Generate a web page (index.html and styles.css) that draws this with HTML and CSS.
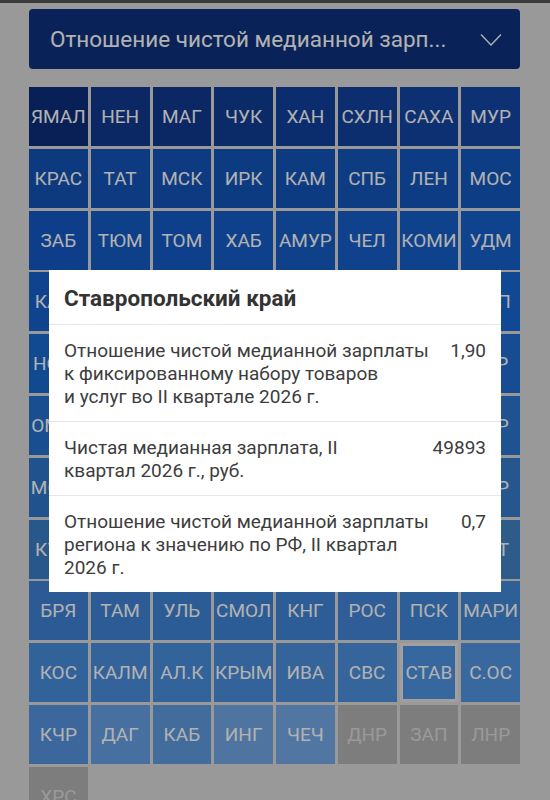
FILE: index.html
```html
<!DOCTYPE html>
<html lang="ru">
<head>
  <meta charset="UTF-8">
  <meta name="viewport" content="width=device-width, initial-scale=1.0">
  <title>Регионы</title>
  <link rel="stylesheet" href="styles.css">
</head>
<body>
  <div class="topbar"></div>
  <div class="page">
    <button class="select">
      <span class="select-text">Отношение чистой медианной зарп...</span>
      <svg class="chevron" width="22" height="14" viewBox="0 0 22 14">
        <polyline points="1,1.5 11,12 21,1.5" fill="none" stroke="#fff" stroke-width="1.4"/>
      </svg>
    </button>
    <div class="grid" id="grid"></div>
  </div>

  <div class="backdrop"></div>

  <div class="dialog">
    <div class="dialog-title">Ставропольский край</div>
    <div class="stat">
      <div class="stat-label">Отношение чистой медианной зарплаты<br>к фиксированному набору товаров<br>и услуг во II квартале 2026 г.</div>
      <div class="stat-value">1,90</div>
    </div>
    <div class="stat">
      <div class="stat-label">Чистая медианная зарплата, II<br>квартал 2026 г., руб.</div>
      <div class="stat-value">49893</div>
    </div>
    <div class="stat">
      <div class="stat-label">Отношение чистой медианной зарплаты<br>региона к значению по РФ, II квартал<br>2026 г.</div>
      <div class="stat-value">0,7</div>
    </div>
  </div>

  <script>
    // region code + fill colour of the map cell
    const regions = [
      ['ЯМАЛ', '#0e2f7b'], ['НЕН', '#103a90'], ['МАГ', '#103a91'], ['ЧУК', '#113d96'],
      ['ХАН', '#11419c'], ['СХЛН', '#12429e'], ['САХА', '#1245a2'], ['МУР', '#1347a4'],
      ['КРАС', '#1352b6'], ['ТАТ', '#1353b8'], ['МСК', '#1354b9'], ['ИРК', '#1455ba'],
      ['КАМ', '#1455bb'], ['СПБ', '#1456bc'], ['ЛЕН', '#1457bd'], ['МОС', '#1458be'],
      ['ЗАБ', '#155ac4'], ['ТЮМ', '#155bc5'], ['ТОМ', '#155bc6'], ['ХАБ', '#155cc7'],
      ['АМУР', '#165dc8'], ['ЧЕЛ', '#165ec9'], ['КОМИ', '#165fca'], ['УДМ', '#1660cb'],
      ['КАРЕ', '#1661cc'], ['ВОЛГ', '#1762cd'], ['КЕМ', '#1763ce'], ['ПЕРМ', '#1764cf'],
      ['ХАК', '#1865d0'], ['АРХ', '#1866d1'], ['ВОЛО', '#1867d2'], ['ЛИП', '#1968d3'],
      ['НОВС', '#1a6ad2'], ['НИЖ', '#1b6ad2'], ['ЯРО', '#1c6bd2'], ['СВЕР', '#1d6cd2'],
      ['КРД', '#1e6cd2'], ['БАШК', '#1f6dd2'], ['ТУЛА', '#206ed2'], ['ТВР', '#216ed2'],
      ['ОМСК', '#2470d0'], ['КАЛУ', '#2571d0'], ['САМ', '#2672d0'], ['ОРЕН', '#2773d0'],
      ['НОВГ', '#2873d0'], ['БЕЛ', '#2974d0'], ['ВЛАД', '#2a75d0'], ['КУР', '#2b76d0'],
      ['МОРД', '#2e78cc'], ['ЕВР', '#2f79cc'], ['РЯЗ', '#307acc'], ['ПРИМ', '#317acc'],
      ['ТУВА', '#327bcc'], ['ЧУВ', '#337ccc'], ['АСТР', '#347dcc'], ['ВОР', '#357dcc'],
      ['КУРГ', '#3a7fc8'], ['ПЕНЗ', '#3b80c8'], ['КИР', '#3c81c8'], ['САР', '#3d81c8'],
      ['ОРЛ', '#3e82c8'], ['АДЫГ', '#3f83c8'], ['ВЛГ', '#4084c8'], ['АЛТ', '#4184c8'],
      ['БРЯ', '#3e82d6'], ['ТАМ', '#3f83d6'], ['УЛЬ', '#4084d7'], ['СМОЛ', '#4085d7'],
      ['КНГ', '#4186d7'], ['РОС', '#4286d8'], ['ПСК', '#4387d8'], ['МАРИ', '#4488d8'],
      ['КОС', '#488ddd'], ['КАЛМ', '#498edd'], ['АЛ.К', '#4a8ede'], ['КРЫМ', '#4b8fde'],
      ['ИВА', '#4c90de'], ['СВС', '#4e91df'], ['СТАВ', '#4f94e4'], ['С.ОС', '#5296e3'],
      ['КЧР', '#5694e0'], ['ДАГ', '#66a0e6'], ['КАБ', '#5f9be0'], ['ИНГ', '#72a6e6'],
      ['ЧЕЧ', '#76aae8'], ['ДНР', null], ['ЗАП', null], ['ЛНР', null],
      ['ХРС', null]
    ];

    const grid = document.getElementById('grid');
    regions.forEach(([code, color]) => {
      const cell = document.createElement('div');
      cell.className = 'cell';
      cell.textContent = code;
      if (color) {
        cell.style.background = color;
      } else {
        cell.classList.add('no-data');
      }
      if (code === 'СТАВ') cell.classList.add('selected');
      grid.appendChild(cell);
    });
  </script>
</body>
</html>
```

FILE: styles.css
```css
body {
  margin: 0;
  background: #dcdcdc;
  font-family: Roboto, "Noto Sans", sans-serif;
  height: 800px;
  overflow: hidden;
}

.topbar {
  height: 3px;
  background: #535353;
}

.page {
  padding: 6px 30px 0 29px;
}

.select {
  display: flex;
  align-items: center;
  justify-content: space-between;
  width: 100%;
  height: 60px;
  padding: 0 18px 0 21px;
  border: none;
  border-radius: 4px;
  background: #0e327e;
  color: #fff;
  font-family: inherit;
  font-size: 22.5px;
}

.chevron {
  margin-top: 2px;
}

.grid {
  margin-top: 18px;
  display: grid;
  grid-template-columns: repeat(8, 1fr);
  grid-auto-rows: 59px;
  column-gap: 3px;
  row-gap: 2.8px;
}

.cell {
  display: flex;
  align-items: center;
  justify-content: center;
  color: #fff;
  font-size: 19px;
  white-space: nowrap;
  box-sizing: border-box;
}

.cell.no-data {
  background: #b4b4b4;
  color: #dcdcdc;
}

.cell.selected {
  border: 3px solid #e6e6e6;
}

.backdrop {
  position: fixed;
  inset: 0;
  background: rgba(0, 0, 0, 0.3);
}

.dialog {
  position: fixed;
  top: 270px;
  left: 49px;
  width: 452px;
  background: #fff;
  color: #3d3d3d;
}

.dialog-title {
  height: 54px;
  line-height: 56px;
  padding: 0 15px;
  font-size: 22.5px;
  font-weight: 700;
  color: #333;
  border-bottom: 1px solid #e6e6e6;
}

.stat {
  display: flex;
  justify-content: space-between;
  padding: 14px 15px 13px;
  font-size: 19px;
  line-height: 23px;
  border-bottom: 1px solid #e6e6e6;
}

.stat:last-child {
  border-bottom: none;
}

.stat-label {
  white-space: nowrap;
}

.stat-value {
  margin-left: 16px;
}
```
